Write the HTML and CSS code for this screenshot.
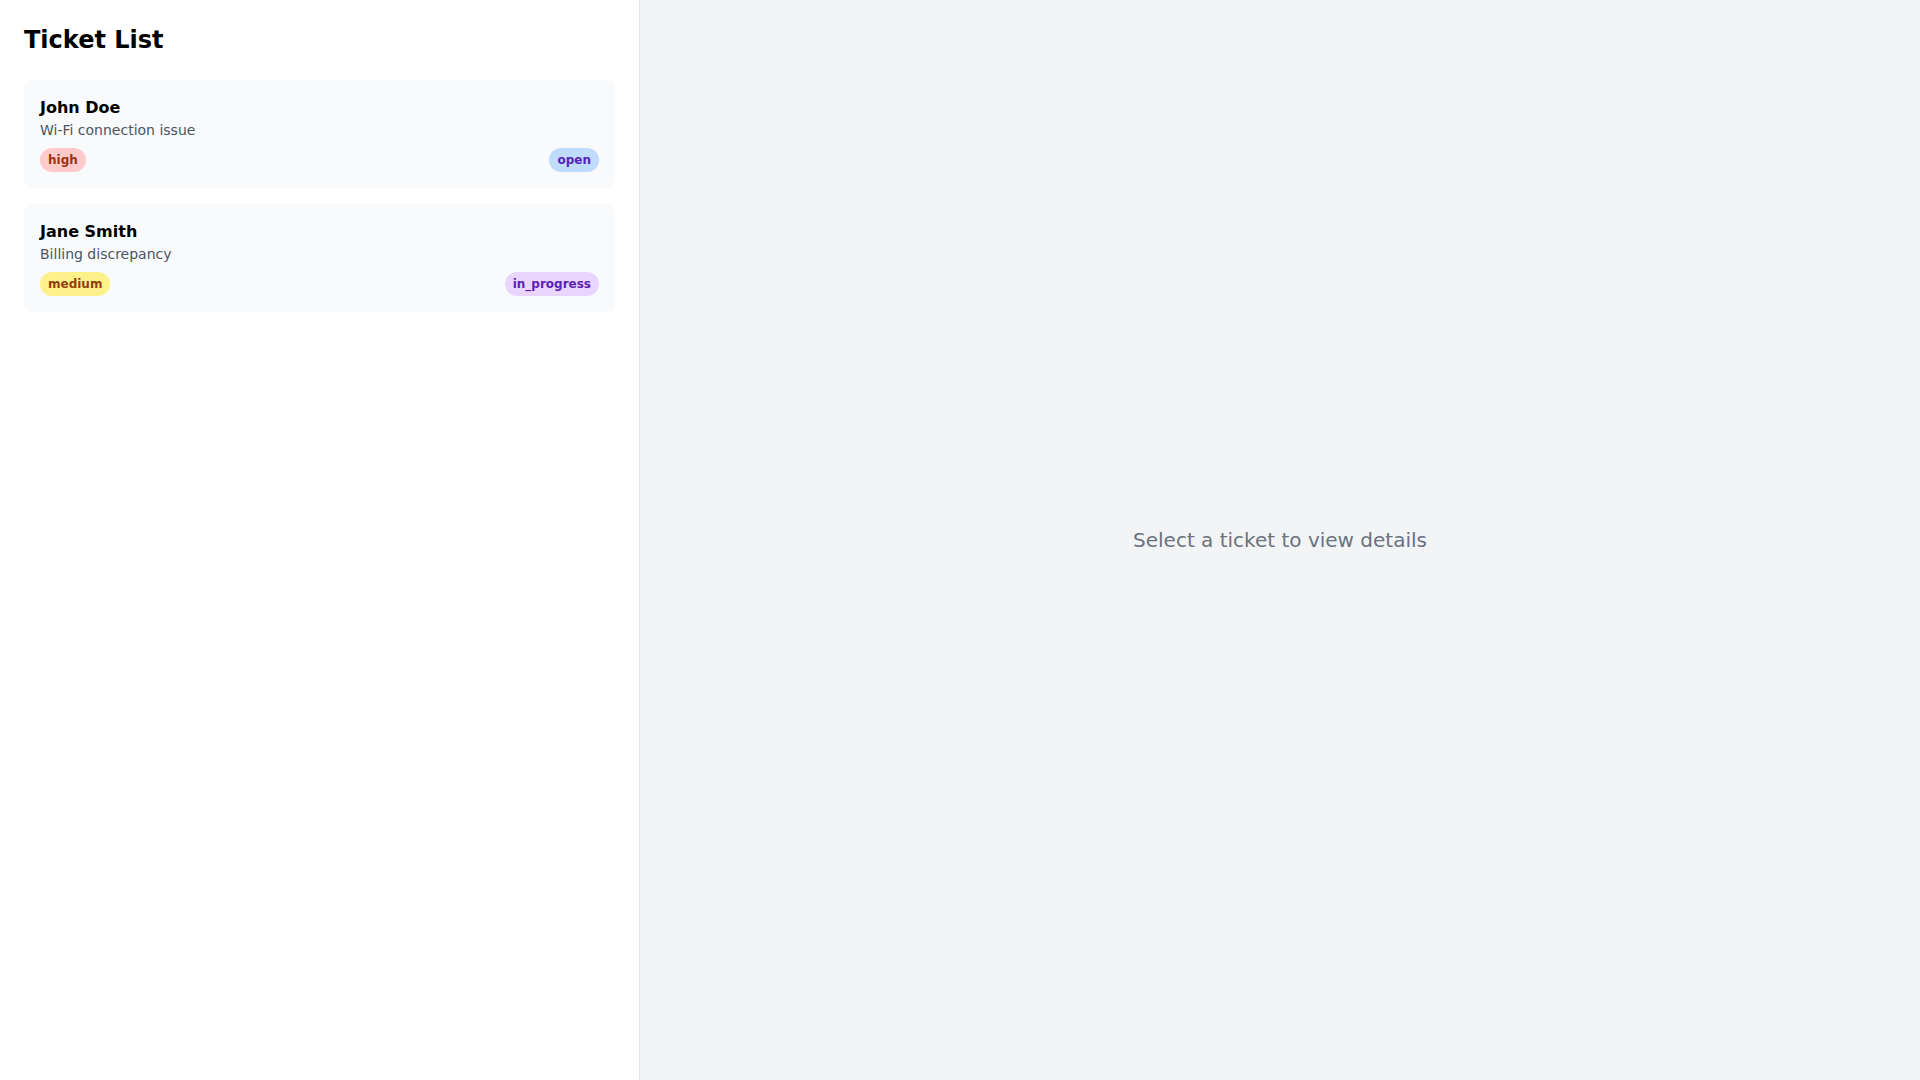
FILE: index.html
```html
<!DOCTYPE html>
<html lang="en">
<head>
  <meta charset="UTF-8">
  <meta name="viewport" content="width=device-width, initial-scale=1.0">
  <title>Tickets</title>
  <link rel="stylesheet" href="styles.css">
</head>
<body>

  <div class="layout">
    <!-- Lista de tickets -->
    <aside class="sidebar">
      <h2 class="title">Ticket List</h2>

      <div class="ticket-list">
        <div class="ticket-card">
          <div class="ticket-name">John Doe</div>
          <div class="ticket-subject">Wi-Fi connection issue</div>
          <div class="ticket-tags">
            <span class="badge badge-high">high</span>
            <span class="badge badge-open">open</span>
          </div>
        </div>

        <div class="ticket-card">
          <div class="ticket-name">Jane Smith</div>
          <div class="ticket-subject">Billing discrepancy</div>
          <div class="ticket-tags">
            <span class="badge badge-medium">medium</span>
            <span class="badge badge-progress">in_progress</span>
          </div>
        </div>
      </div>
    </aside>

    <!-- Detalhes -->
    <main class="details">
      <p class="empty-text">Select a ticket to view details</p>
    </main>
  </div>

</body>
</html>
```

FILE: styles.css
```css
/* Estilo geral */
* {
  box-sizing: border-box;
}

body {
  margin: 0;
  font-family: "DejaVu Sans", sans-serif;
  color: #000;
}

.layout {
  display: flex;
  height: 100vh;
}

/* Coluna esquerda */
.sidebar {
  width: 640px;
  flex-shrink: 0;
  padding: 24px;
  background-color: #ffffff;
  border-right: 1px solid #e5e7eb;
}

.title {
  margin: 0 0 24px 0;
  font-size: 24px;
  line-height: 32px;
  font-weight: bold;
}

.ticket-list {
  display: flex;
  flex-direction: column;
  gap: 16px;
}

.ticket-card {
  background-color: #f9fafb;
  border-radius: 8px;
  padding: 16px;
}

.ticket-name {
  font-size: 16px;
  line-height: 24px;
  font-weight: bold;
}

.ticket-subject {
  font-size: 14px;
  line-height: 20px;
  color: #4b5563;
}

.ticket-tags {
  display: flex;
  justify-content: space-between;
  margin-top: 8px;
}

/* Etiquetas */
.badge {
  font-size: 12px;
  line-height: 16px;
  font-weight: bold;
  padding: 4px 8px;
  border-radius: 9999px;
}

.badge-high {
  background-color: #fecaca;
  color: #9a3412;
}

.badge-medium {
  background-color: #fef08a;
  color: #92400e;
}

.badge-open {
  background-color: #bfdbfe;
  color: #5b21b6;
}

.badge-progress {
  background-color: #e9d5ff;
  color: #5b21b6;
}

/* Painel direito */
.details {
  flex: 1;
  display: flex;
  align-items: center;
  justify-content: center;
  background-color: #f3f4f6;
}

.empty-text {
  margin: 0;
  font-size: 20px;
  line-height: 28px;
  color: #6b7280;
}
```
